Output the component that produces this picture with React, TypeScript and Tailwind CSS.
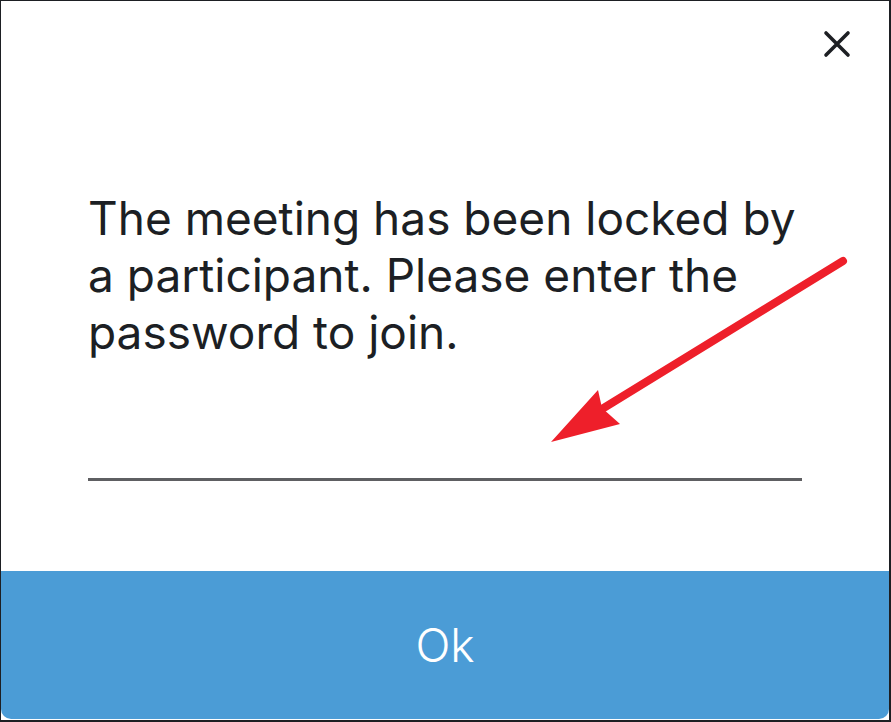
function Arrow() {
  return (
    <svg
      className="absolute -left-px -top-px w-[891px] h-[722px] pointer-events-none"
      viewBox="0 0 891 722"
    >
      <line
        x1="843"
        y1="261"
        x2="602"
        y2="409"
        stroke="#ee1f2a"
        strokeWidth="8"
        strokeLinecap="round"
      />
      <polygon points="551,442 598,390 602,408 620,424" fill="#ee1f2a" />
    </svg>
  );
}

export default function App() {
  return (
    <div className="relative w-[891px] h-[722px] bg-white border-t border-l border-r-2 border-b-2 border-[#1d1f23] flex flex-col font-['Inter',sans-serif]">
      <div className="flex-1 flex flex-col px-[87px]">
        <div className="flex justify-end pt-[29px] -mr-[49px]">
          <button className="w-[28px] h-[28px] flex items-center justify-center text-[#1d1f23]">
            <svg viewBox="0 0 28 28" className="w-[28px] h-[28px]">
              <path
                d="M3 3 L25 25 M25 3 L3 25"
                stroke="currentColor"
                strokeWidth="3.6"
                strokeLinecap="round"
              />
            </svg>
          </button>
        </div>
        <p className="mt-[132px] text-[46px] leading-[57px] text-[#1c1f24] whitespace-nowrap">
          The meeting has been locked by
          <br />
          a participant. Please enter the
          <br />
          password to join.
        </p>
        <div className="mt-[117px] h-[3px] bg-[#5e5f62]" />
      </div>
      <button className="h-[148px] mb-px w-full bg-[#4b9cd6] rounded-b-[10px] text-white text-[46px] font-light flex items-center justify-center">
        Ok
      </button>
      <Arrow />
    </div>
  );
}
